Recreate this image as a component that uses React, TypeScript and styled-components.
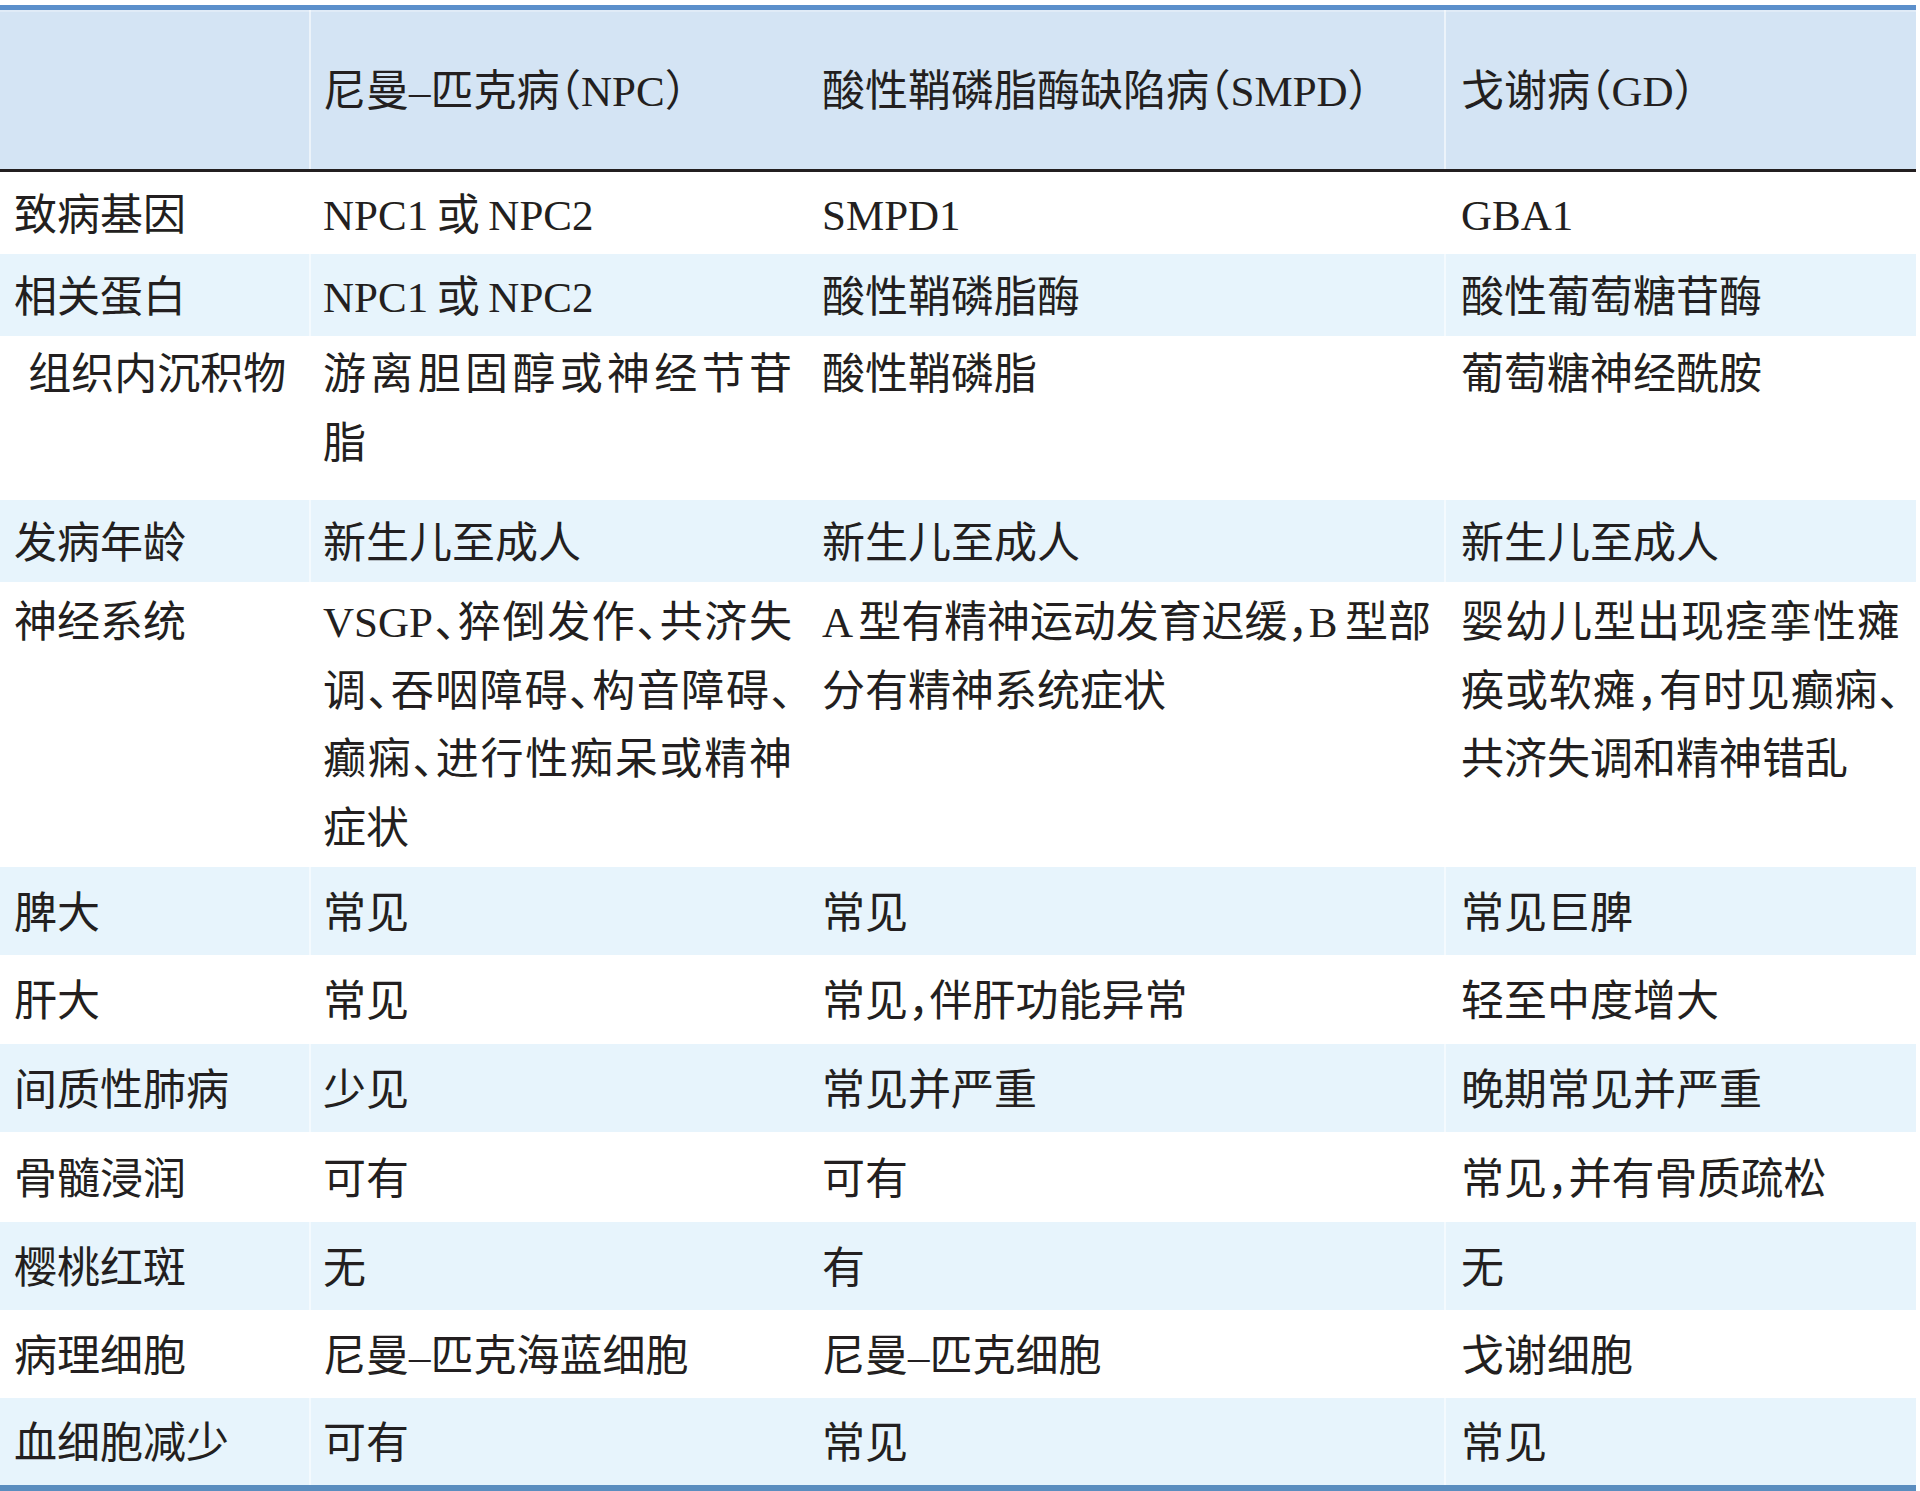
import React from "react";
import styled, { createGlobalStyle } from "styled-components";

type Line = string | [string, number];
type CellData = string | Line[];
type RowData = { h: number; top?: number; cells: CellData[] };

const head = ["", "尼曼–匹克病（NPC）", "酸性鞘磷脂酶缺陷病（SMPD）", "戈谢病（GD）"];

const rows: RowData[] = [
  { h: 82, cells: ["致病基因", "NPC1\u2009或\u2009NPC2", "SMPD1", "GBA1"] },
  { h: 82, cells: ["相关蛋白", "NPC1\u2009或\u2009NPC2", "酸性鞘磷脂酶", "酸性葡萄糖苷酶"] },
  {
    h: 164,
    top: 5,
    cells: ["\u2004组织内沉积物", ["游离胆固醇或神经节苷", "脂"], "酸性鞘磷脂", "葡萄糖神经酰胺"],
  },
  { h: 82, cells: ["发病年龄", "新生儿至成人", "新生儿至成人", "新生儿至成人"] },
  {
    h: 285,
    top: 7,
    cells: [
      "神经系统",
      ["VSGP、猝倒发作、共济失", "调、吞咽障碍、构音障碍、", "癫痫、进行性痴呆或精神", "症状"],
      [["A 型有精神运动发育迟缓，B 型部", -3], "分有精神系统症状"],
      ["婴幼儿型出现痉挛性瘫", "痪或软瘫，有时见癫痫、", "共济失调和精神错乱"],
    ],
  },
  { h: 88, cells: ["脾大", "常见", "常见", "常见巨脾"] },
  { h: 89, cells: ["肝大", "常见", "常见，伴肝功能异常", "轻至中度增大"] },
  { h: 88, cells: ["间质性肺病", "少见", "常见并严重", "晚期常见并严重"] },
  { h: 90, cells: ["骨髓浸润", "可有", "可有", "常见，并有骨质疏松"] },
  { h: 88, cells: ["樱桃红斑", "无", "有", "无"] },
  { h: 88, cells: ["病理细胞", "尼曼–匹克海蓝细胞", "尼曼–匹克细胞", "戈谢细胞"] },
  { h: 87, cells: ["血细胞减少", "可有", "常见", "常见"] },
];

export default function App() {
  return (
    <>
      <GlobalStyle />
      <Table>
        <Row $h={162} $bg="#d4e4f4" $head>
          {head.map((t, i) => (
            <Cell key={i} $rule={i === 1 || i === 3}>
              {t}
            </Cell>
          ))}
        </Row>
        {rows.map((r, ri) => (
          <Row key={ri} $h={r.h} $bg={ri % 2 ? "#e7f4fc" : "#ffffff"}>
            {r.cells.map((c, ci) => (
              <Cell key={ci} $top={r.top} $rule={ci === 1 || ci === 3}>
                {typeof c === "string"
                  ? c
                  : c.map((l, li) => {
                      const text = typeof l === "string" ? l : l[0];
                      const tight = typeof l === "string" ? 0 : l[1];
                      return (
                        <TextLine key={li} $fill={li < c.length - 1} $tight={tight}>
                          {text}
                        </TextLine>
                      );
                    })}
              </Cell>
            ))}
          </Row>
        ))}
      </Table>
    </>
  );
}

const GlobalStyle = createGlobalStyle`
  html, body {
    margin: 0;
    padding: 0;
    background: #ffffff;
  }

  body {
    font-family: "Liberation Serif", "Noto Sans CJK SC", serif;
    color: #231f20;
  }
`;

const Table = styled.div`
  width: 1916px;
  margin-top: 5px;
  border-top: 5px solid #5b8fcb;
  border-bottom: 6px solid #5a8dbf;
`;

const Row = styled.div<{ $h: number; $bg: string; $head?: boolean }>`
  display: grid;
  grid-template-columns: 309px 499px 636px 472px;
  box-sizing: border-box;
  height: ${(p) => p.$h}px;
  background-color: ${(p) => p.$bg};
  border-bottom: ${(p) => (p.$head ? "3px solid #231f20" : "none")};
  box-shadow: ${(p) => (p.$head ? "inset 0 2px 0 #e0ebf7" : "none")};

  & > :nth-child(4) {
    padding-left: 17px;
  }
`;

const Cell = styled.div<{ $top?: number; $rule?: boolean }>`
  display: flex;
  flex-direction: column;
  justify-content: ${(p) => (p.$top !== undefined ? "flex-start" : "center")};
  padding: ${(p) => p.$top ?? 6}px 16px 0 14px;
  min-width: 0;

  box-shadow: ${(p) => (p.$rule ? "inset 2px 0 rgba(255, 255, 255, 0.55)" : "none")};

  font-size: 43px;
  line-height: 68.5px;
  font-feature-settings: "halt";
  white-space: nowrap;
`;

const TextLine = styled.span<{ $fill: boolean; $tight: number }>`
  display: block;
  text-align: justify;
  text-align-last: ${(p) => (p.$fill ? "justify" : "start")};
  letter-spacing: ${(p) => p.$tight}px;
`;
